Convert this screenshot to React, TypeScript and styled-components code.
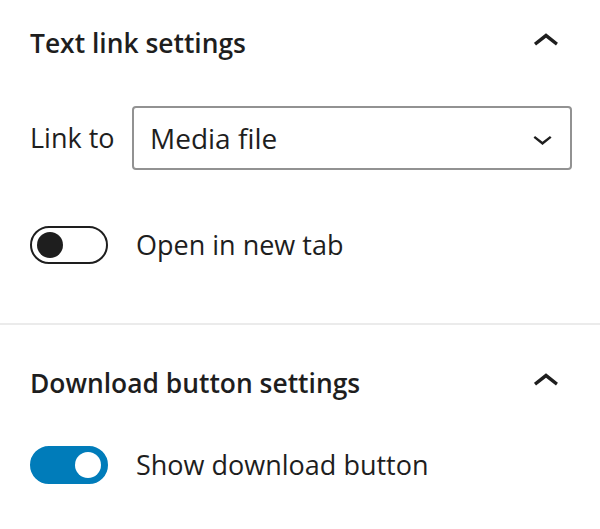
import React from "react";
import styled, { createGlobalStyle } from "styled-components";

const GlobalStyle = createGlobalStyle`
  html, body {
    margin: 0;
    padding: 0;
    background: #ffffff;
  }
  body {
    font-family: "Open Sans", "Noto Sans", Arial, sans-serif;
    color: #1e1e1e;
  }
`;

const Sidebar = styled.div`
  width: 600px;
  display: flex;
  flex-direction: column;
`;

const Panel = styled.section<{ $first?: boolean }>`
  display: flex;
  flex-direction: column;
  padding: ${p => (p.$first ? "0" : "15px")} 28px 59px 30px;
  border-bottom: ${p => (p.$first ? "2px solid #ebebeb" : "none")};
`;

const Header = styled.div`
  height: 86px;
  display: flex;
  align-items: center;
  justify-content: space-between;
`;

const Title = styled.h2`
  margin: 0;
  font-size: 26.4px;
  font-weight: 600;
  line-height: 1.3;
  color: #1e1e1e;
`;

const IconButton = styled.button`
  width: 52px;
  height: 52px;
  padding: 0;
  border: 0;
  background: none;
  display: flex;
  align-items: center;
  justify-content: center;
  margin-top: -3px;
  svg {
    width: 52px;
    height: 52px;
    fill: #1e1e1e;
  }
`;

const Body = styled.div`
  display: flex;
  flex-direction: column;
  gap: 56px;
  padding-top: 20px;
`;

const FieldRow = styled.div`
  display: grid;
  grid-template-columns: 102px 1fr;
  align-items: center;
`;

const Label = styled.label`
  font-size: 27px;
  line-height: 1.3;
  color: #1e1e1e;
`;

const SelectBox = styled.div`
  height: 64px;
  box-sizing: border-box;
  border: 2px solid #929292;
  border-radius: 4px;
  display: flex;
  align-items: center;
  justify-content: space-between;
  padding: 0 8px 0 16px;
  font-size: 28px;
  color: #1e1e1e;
  svg {
    width: 39px;
    height: 39px;
    fill: #1e1e1e;
  }
`;

const ToggleRow = styled.div`
  display: flex;
  align-items: center;
  gap: 28px;
`;

const Track = styled.span<{ $on: boolean }>`
  width: 78px;
  height: 38px;
  box-sizing: border-box;
  border-radius: 19px;
  border: 2px solid ${p => (p.$on ? "#007cba" : "#1e1e1e")};
  background: ${p => (p.$on ? "#007cba" : "#ffffff")};
  display: flex;
  align-items: center;
  justify-content: ${p => (p.$on ? "flex-end" : "flex-start")};
  padding: 0 5px;
  flex-shrink: 0;
`;

const Thumb = styled.span<{ $on: boolean }>`
  width: 26px;
  height: 26px;
  border-radius: 50%;
  background: ${p => (p.$on ? "#ffffff" : "#1e1e1e")};
`;

const ChevronUp = () => (
  <svg viewBox="0 0 24 24" aria-hidden="true">
    <path d="M6.5 12.4L12 8l5.5 4.4-.9 1.2L12 10l-4.6 3.6-1-1.2z" />
  </svg>
);

const ChevronDown = () => (
  <svg viewBox="0 0 24 24" aria-hidden="true">
    <path d="M17.5 11.6L12 16l-5.5-4.4.9-1.2L12 14l4.6-3.6 1 1.2z" />
  </svg>
);

const Toggle = ({ on, label }: { on: boolean; label: string }) => (
  <ToggleRow>
    <Track $on={on}>
      <Thumb $on={on} />
    </Track>
    <Label>{label}</Label>
  </ToggleRow>
);

export default function App() {
  return (
    <>
      <GlobalStyle />
      <Sidebar>
        <Panel $first>
          <Header>
            <Title>Text link settings</Title>
            <IconButton>
              <ChevronUp />
            </IconButton>
          </Header>
          <Body>
            <FieldRow>
              <Label>Link to</Label>
              <SelectBox>
                <span>Media file</span>
                <ChevronDown />
              </SelectBox>
            </FieldRow>
            <Toggle on={false} label="Open in new tab" />
          </Body>
        </Panel>
        <Panel>
          <Header>
            <Title>Download button settings</Title>
            <IconButton>
              <ChevronUp />
            </IconButton>
          </Header>
          <Body>
            <Toggle on={true} label="Show download button" />
          </Body>
        </Panel>
      </Sidebar>
    </>
  );
}
